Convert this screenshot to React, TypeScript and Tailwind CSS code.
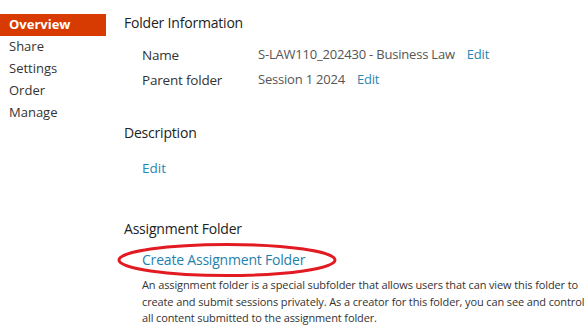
import React from 'react';

const navItems = ['Overview', 'Share', 'Settings', 'Order', 'Manage'];

const font = { fontFamily: '"Open Sans", "Noto Sans", sans-serif' };

const App: React.FC = () => {
  return (
    <div className="flex w-[586px] h-[327px] bg-white text-[#333] overflow-hidden" style={font}>
      {/* Sidebar */}
      <nav className="w-[106px] shrink-0 pt-[14px] flex flex-col">
        {navItems.map((item, i) => (
          <div
            key={item}
            className={
              i === 0
                ? 'h-[22px] pl-[9px] flex items-center bg-[#d83b01] text-white font-bold text-[13px]'
                : 'h-[22px] pl-[9px] flex items-center text-[13px] text-[#333]'
            }
          >
            {item}
          </div>
        ))}
      </nav>

      {/* Main */}
      <main className="flex-1 pl-[18px] pt-[12px]">
        <h2 className="text-[14px] tracking-[-0.2px] text-[#222] leading-[22px]">Folder Information</h2>
        <div className="pl-[18px] mt-[10px] flex flex-col gap-[3px] text-[13.5px] tracking-[-0.2px]">
          <div className="flex items-center h-[22px]">
            <span className="w-[116px] text-[#333]">Name</span>
            <span className="text-[13px] text-[#555]">S-LAW110_202430 - Business Law</span>
            <a className="ml-[12px] text-[13px] text-[#2a87b0]">Edit</a>
          </div>
          <div className="flex items-center h-[22px]">
            <span className="w-[116px] text-[#333]">Parent folder</span>
            <span className="text-[13px] text-[#555]">Session 1 2024</span>
            <a className="ml-[12px] text-[13px] text-[#2a87b0]">Edit</a>
          </div>
        </div>

        <h2 className="mt-[31px] text-[14px] tracking-[-0.2px] text-[#222] leading-[22px]">Description</h2>
        <a className="block pl-[18px] mt-[13px] text-[13.5px] text-[#2a87b0] leading-[22px]">Edit</a>

        <h2 className="mt-[39px] text-[14px] tracking-[-0.2px] text-[#222] leading-[22px]">Assignment Folder</h2>
        <div className="relative pl-[18px] mt-[8px] leading-[22px]">
          <a className="text-[14px] tracking-[-0.2px] text-[#1f7fae]">Create Assignment Folder</a>
          <svg
            className="absolute left-[-7px] top-[-6px] pointer-events-none"
            width="220"
            height="36"
            viewBox="0 0 220 36"
          >
            <ellipse cx="110" cy="18" rx="108" ry="15.5" fill="none" stroke="#e21b23" strokeWidth="3" />
          </svg>
        </div>
        <p className="pl-[18px] mt-[6px] text-[11px] tracking-[-0.12px] leading-[16.5px] text-[#333] whitespace-nowrap">
          An assignment folder is a special subfolder that allows users that can view this folder to
          <br />
          create and submit sessions privately. As a creator for this folder, you can see and control
          <br />
          all content submitted to the assignment folder.
        </p>
      </main>
    </div>
  );
};

export default App;
